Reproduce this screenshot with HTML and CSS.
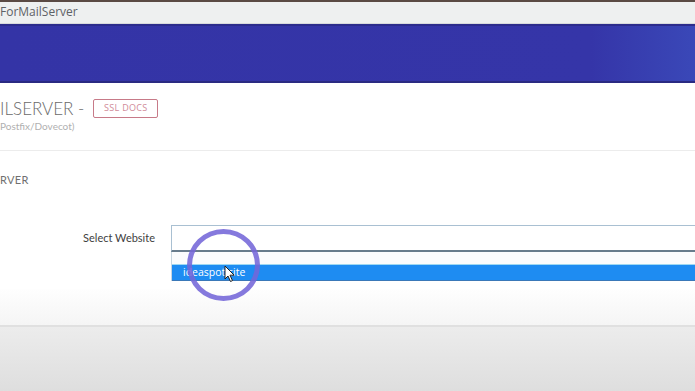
FILE: index.html
```html
<!DOCTYPE html>
<html>
<head>
<meta charset="utf-8">
<link rel="stylesheet" href="styles.css">
</head>
<body>
<div class="titlebar">ForMailServer</div>
<div class="banner"></div>
<main class="content">
  <div class="head">
    <div class="title-row">
      <h1 class="title">ILSERVER -</h1>
      <span class="badge">SSL DOCS</span>
    </div>
    <div class="subtitle">Postfix/Dovecot)</div>
  </div>
  <div class="section">
    <div class="section-title">RVER</div>
    <div class="form-row">
      <label class="label">Select Website</label>
      <div class="select-wrap">
        <div class="select-box"></div>
        <div class="dropdown">
          <div class="opt-blank"></div>
          <div class="opt-selected">ideaspot.site</div>
        </div>
        <div class="ring"></div>
        <svg class="cursor" width="12" height="18" viewBox="0 0 12 18"><path d="M1 1 L1 14 L4 11 L6.5 16.5 L8.5 15.6 L6 10.2 L10.2 10.2 Z" fill="#fff" stroke="#222" stroke-width="1"/></svg>
      </div>
    </div>
  </div>
  <div class="footer-top"></div>
  <div class="footer"></div>
</main>
</body>
</html>
```

FILE: styles.css
```css
* { box-sizing: border-box; }
html, body { margin: 0; padding: 0; }
body {
  width: 695px;
  height: 391px;
  overflow: hidden;
  background: #fff;
  font-family: "Open Sans", "Liberation Sans", sans-serif;
}
.titlebar {
  height: 24px;
  background: #eef0f0;
  border-top: 2px solid #5a4a44;
  border-bottom: 1px solid #d8dadc;
  color: #5e6266;
  font-size: 12px;
  line-height: 19px;
  padding-left: 0;
}
.banner {
  height: 59px;
  background: linear-gradient(90deg, #3434a6 0%, #3535a8 85%, #3a48b8 100%);
  border-top: 2px solid #2c2c8c;
  border-bottom: 2px solid #2a2a82;
}
.content { display: flex; flex-direction: column; }
.head {
  padding-top: 16px;
  height: 68px;
  border-bottom: 1px solid #ececec;
}
.title-row { display: flex; align-items: center; gap: 9px; height: 19px; }
.title {
  margin: 0;
  font-family: "Lato", "Open Sans", sans-serif;
  font-weight: 300;
  font-size: 17px;
  letter-spacing: 0;
  color: #6a6a6a;
  line-height: 19px;
  white-space: nowrap;
}
.badge {
  border: 1.5px solid #c77a88;
  border-radius: 2px;
  color: #d08a98;
  font-size: 9px;
  letter-spacing: 0.3px;
  height: 19px;
  line-height: 16px;
  width: 65px;
  text-align: center;
  white-space: nowrap;
  flex-shrink: 0;
}
.subtitle {
  margin-top: 2px;
  font-size: 10px;
  color: #b0b0b0;
  font-family: "Lato", sans-serif;
}
.section { position: relative; height: 138px; }
.section-title {
  margin-top: 22px;
  font-size: 11px;
  color: #707070;
  font-family: "Lato", sans-serif;
  letter-spacing: 0.3px;
}
.form-row {
  display: flex;
  margin-top: 39px;
}
.label {
  width: 171px;
  padding-right: 16px;
  text-align: right;
  font-size: 11px;
  color: #3e3e3e;
  line-height: 26px;
  font-family: "Lato", sans-serif;
}
.select-wrap { position: relative; flex: 1; margin-right: -4px; }
.select-box {
  height: 27px;
  border: 1px solid #a9c0d2;
  border-bottom: 2px solid #687c8c;
  border-right: none;
  background: #fff;
}
.dropdown { border-left: 1px solid #c8d6e0; }
.opt-blank {
  height: 13px;
  background: #fbfcfd;
  border-bottom: 1px solid #9ed8f2;
}
.opt-selected {
  height: 16px;
  background: #1e8cf2;
  border-bottom: 1px solid #3a78b8;
  color: #fff;
  font-size: 10.5px;
  line-height: 15px;
  padding-left: 11px;
}
.ring {
  position: absolute;
  left: 16px;
  top: 4px;
  width: 73px;
  height: 72px;
  border: 5px solid rgba(116, 102, 216, 0.88);
  border-radius: 50%;
}
.cursor { position: absolute; left: 53px; top: 40px; }
.footer-top {
  height: 38px;
  background: linear-gradient(#fefefe, #f5f5f5);
  border-bottom: 2px solid #e0e0e0;
}
.footer {
  height: 64px;
  background: linear-gradient(#ececec, #dedede);
}
```
